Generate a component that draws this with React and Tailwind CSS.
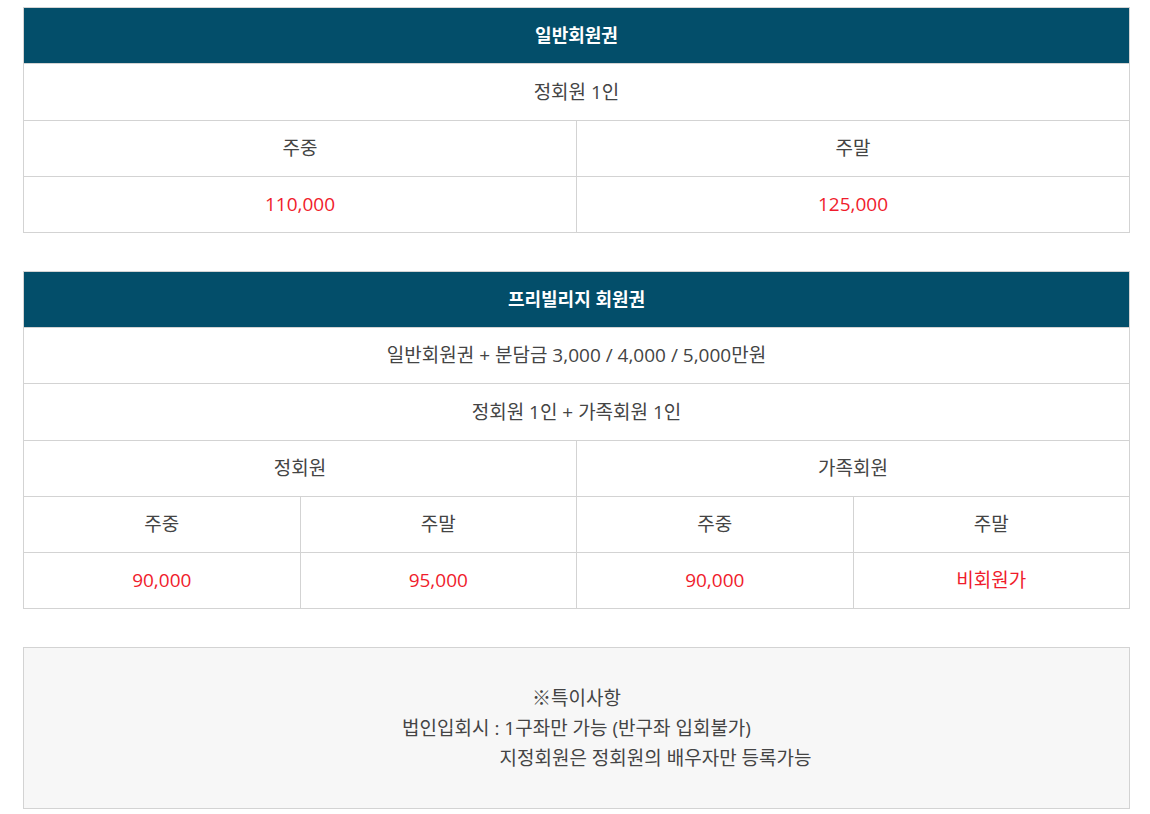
export default function App() {
  const th = 'bg-[#034e6a] text-white font-bold text-[18px] h-[56px] border border-[#d3d3d3] text-center';
  const td = 'h-[56px] border border-[#d3d3d3] text-center text-[19px] text-[#444]';
  const red = 'h-[56px] border border-[#d3d3d3] text-center text-[19px] text-[#f01c2c]';

  return (
    <div
      className="bg-white min-h-[814px] pt-[7px] px-[23px]"
      style={{ fontFamily: '"Open Sans", "Noto Sans CJK KR", sans-serif' }}
    >
      <table className="w-[1107px] border-collapse table-fixed">
        <tbody>
          <tr>
            <th colSpan={2} className={th}>일반회원권</th>
          </tr>
          <tr className="h-[57px]">
            <td colSpan={2} className={td}>정회원 1인</td>
          </tr>
          <tr>
            <td className={td}>주중</td>
            <td className={td}>주말</td>
          </tr>
          <tr>
            <td className={red}>110,000</td>
            <td className={red}>125,000</td>
          </tr>
        </tbody>
      </table>

      <table className="w-[1107px] border-collapse table-fixed mt-[38px]">
        <tbody>
          <tr>
            <th colSpan={4} className={th}>프리빌리지 회원권</th>
          </tr>
          <tr>
            <td colSpan={4} className={td}>일반회원권 + 분담금 3,000 / 4,000 / 5,000만원</td>
          </tr>
          <tr className="h-[57px]">
            <td colSpan={4} className={td}>정회원 1인 + 가족회원 1인</td>
          </tr>
          <tr>
            <td colSpan={2} className={td}>정회원</td>
            <td colSpan={2} className={td}>가족회원</td>
          </tr>
          <tr>
            <td className={td}>주중</td>
            <td className={td}>주말</td>
            <td className={td}>주중</td>
            <td className={td}>주말</td>
          </tr>
          <tr>
            <td className={red}>90,000</td>
            <td className={red}>95,000</td>
            <td className={red}>90,000</td>
            <td className={red}>비회원가</td>
          </tr>
        </tbody>
      </table>

      <div className="w-[1107px] mt-[38px] h-[162px] bg-[#f7f7f7] border border-[#d3d3d3] flex flex-col items-center justify-center text-[19px] leading-[30px] text-[#444]">
        <p>※특이사항</p>
        <p>법인입회시 : 1구좌만 가능 (반구좌 입회불가)</p>
        <p className="pl-[158px]">지정회원은 정회원의 배우자만 등록가능</p>
      </div>
    </div>
  );
}
